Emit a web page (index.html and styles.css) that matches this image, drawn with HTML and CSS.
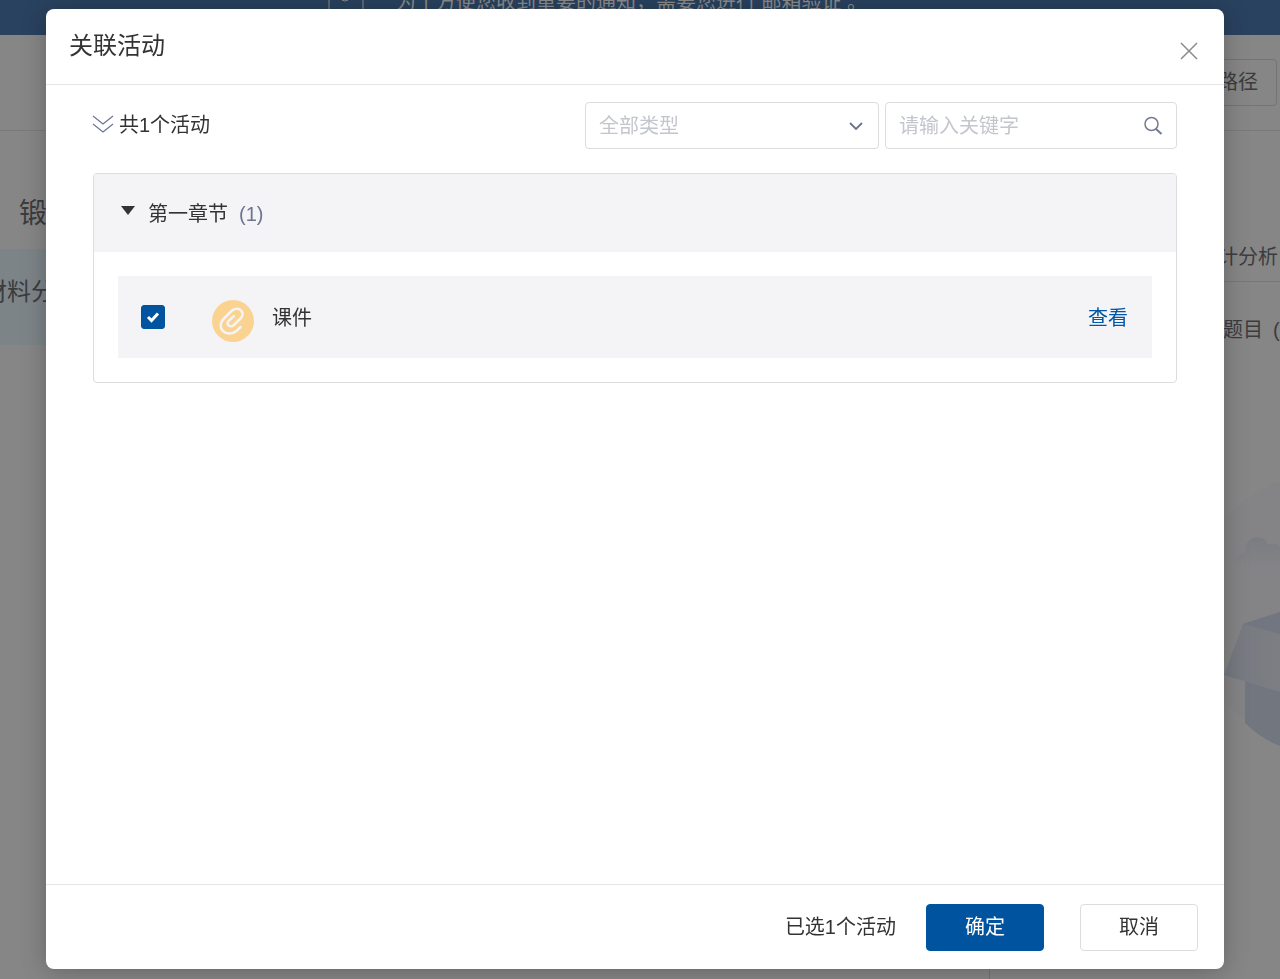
FILE: index.html
```html
<!DOCTYPE html>
<html lang="zh-CN">
<head>
<meta charset="utf-8">
<title>关联活动</title>
<link rel="stylesheet" href="styles.css">
</head>
<body>
<div class="page" aria-hidden="true">
  <div class="banner">
    <svg class="banner-icon" viewBox="0 0 36 28" width="36" height="28"><path d="M1 0V27M35 0V27" /><circle cx="17" cy="13" r="4"/></svg>
    <p>为了方便您收到重要的通知，需要您进行 邮箱验证 。</p>
  </div>
  <div class="page-head"><span class="page-button">学习路径</span></div>
  <div class="columns">
    <div class="sidebar">
      <h2 class="sidebar-title">锻造</h2>
      <div class="sidebar-item"><span>材料分析</span></div>
    </div>
    <div class="aside">
      <div class="aside-tab">统计分析</div>
      <div class="aside-label"><span>题目</span><span>(0)</span></div>
      <svg class="empty-art" viewBox="0 0 56 280" width="56" height="280">
        <defs>
          <linearGradient id="cloud" x1="0" y1="0" x2="0" y2="1"><stop offset="0" stop-color="#7a7c82"/><stop offset="1" stop-color="#848486"/></linearGradient>
          <linearGradient id="flap" x1="0" y1="0" x2="1" y2="0"><stop offset="0" stop-color="#757981"/><stop offset="1" stop-color="#7c7e82"/></linearGradient>
        </defs>
        <circle cx="101" cy="140" r="136" fill="#848486"/>
        <path d="M10 98C10 88 16 84 21 83C20 63 42 64 44 75C50 72 54 74 56 77V98Z" fill="url(#cloud)"/>
        <path d="M21 208L56 220V276Q36 268 21 253Z" fill="#72767f"/>
        <path d="M19 154L56 142V222L0 205Z" fill="url(#flap)"/>
        <path d="M19 154L56 142V164Z" fill="#727680"/>
      </svg>
    </div>
  </div>
</div>

<div class="overlay">
  <section class="modal" role="dialog" aria-modal="true" aria-labelledby="dialog-title">
    <header class="modal-head">
      <h1 id="dialog-title">关联活动</h1>
      <button class="close" type="button" aria-label="关闭"><svg viewBox="0 0 18 18" width="18" height="18"><path d="M1 1L17 17M17 1L1 17"/></svg></button>
    </header>
    <div class="modal-body">
      <div class="toolbar">
        <button class="expand" type="button"><svg viewBox="0 0 22 18" width="22" height="18"><path d="M1 1L11 9L21 1M1 9L11 17L21 9"/></svg><span>共1个活动</span></button>
        <div class="select-box">
          <select aria-label="活动类型"><option>全部类型</option></select>
          <svg viewBox="0 0 14 8" width="14" height="8"><path d="M1 1L7 7L13 1"/></svg>
        </div>
        <div class="search-box">
          <input type="text" placeholder="请输入关键字" aria-label="关键字">
          <button type="button" aria-label="搜索"><svg viewBox="0 0 20 20" width="20" height="20"><circle cx="8.500" cy="8" r="6.500"/><path d="M13 13L18.500 18" stroke-width="2"/></svg></button>
        </div>
      </div>
      <div class="chapter">
        <button class="chapter-head" type="button" aria-expanded="true"><svg viewBox="0 0 14 9" width="14" height="9"><path d="M0 0H14L7 9Z"/></svg><span>第一章节</span><span class="count">(1)</span></button>
        <div class="chapter-body">
          <div class="activity">
            <span class="check">
              <input type="checkbox" id="courseware" checked>
              <svg viewBox="0 0 24 24" width="24" height="24"><path d="M7 12L10.500 15.500L17 8.500"/></svg>
            </span>
            <svg class="clip" viewBox="0 0 42 42" width="42" height="42"><circle cx="21" cy="21" r="21"/><path d="M28.500 27L25 30.500C20.500 34.500 14.500 34.500 11 31C7.500 27.500 8 22.500 11.500 19L19.500 11C22.500 8 27 8 29 10.500C31.500 13 31 16 28.500 18.500L22 25C18.500 28 13.500 24.500 16.500 21L21.800 16"/></svg>
            <label for="courseware">课件</label>
            <a href="#">查看</a>
          </div>
        </div>
      </div>
    </div>
    <footer class="modal-foot">
      <span class="selected">已选1个活动</span>
      <button class="btn primary" type="button">确定</button>
      <button class="btn" type="button">取消</button>
    </footer>
  </section>
</div>
</body>
</html>
```
FILE: styles.css
```css
* { box-sizing: border-box; }
body, h1, h2, p { margin: 0; font-weight: 400; }
body, button, input, select {
  font-family: "Liberation Sans", "Noto Sans CJK SC", sans-serif;
  font-size: 20px;
  line-height: 24px;
  color: #333;
}
button { padding: 0; border: 0; background: none; cursor: pointer; }
svg { display: block; flex: none; fill: none; }

.page {
  height: 100vh;
  overflow: hidden;
  display: flex;
  flex-direction: column;
  background: #868686;
  color: #3c3c3e;
}
.banner {
  height: 35px;
  flex: none;
  display: flex;
  gap: 32px;
  padding-left: 328px;
  background: #29425f;
  color: #8b8b8b;
}
.banner p { margin-top: -10px; white-space: nowrap; }
.banner-icon { margin-top: -16px; stroke: #8b8b8b; stroke-width: 1; }
.page-head {
  height: 96px;
  flex: none;
  display: flex;
  justify-content: flex-end;
  align-items: center;
  padding-right: 3px;
  border-bottom: 1px solid #797979;
}
.page-button {
  padding: 10px 18px 11px;
  border: 1px solid #747476;
  border-radius: 4px;
}
.columns { flex: 1; min-height: 0; display: flex; }
.sidebar { flex: 1; border-right: 1px solid #747474; }
.sidebar-title { padding: 67px 20px 19px 19px; font-size: 28px; line-height: 32px; }
.sidebar-item {
  display: flex;
  align-items: center;
  height: 96px;
  padding-bottom: 10px;
  background: #7d8488;
  overflow: hidden;
  font-size: 24px;
}
.sidebar-item span { margin-left: -17px; }
.aside { width: 290px; overflow: hidden; }
.aside-tab {
  padding: 114px 2px 12px;
  border-bottom: 1px solid #777;
  text-align: right;
}
.aside-label { display: flex; gap: 10px; padding: 36px 0 0 233px; white-space: nowrap; }
.empty-art { margin: 128px 0 0 auto; overflow: hidden; }

.overlay { position: fixed; inset: 0; padding: 9px 56px 10px 46px; display: flex; }
.modal {
  flex: 1;
  min-width: 0;
  display: flex;
  flex-direction: column;
  background: #fff;
  border-radius: 8px;
  box-shadow: 0 2px 24px rgba(0, 0, 0, 0.25);
}
.modal-head {
  display: flex;
  justify-content: space-between;
  align-items: flex-start;
  height: 76px;
  padding: 21px 24px 0 23px;
  border-bottom: 1px solid #e6e6e6;
}
.modal-head h1 { font-size: 24px; line-height: 32px; }
.close { padding: 12px 2px 0; }
.close svg { stroke: #8a8a8a; stroke-width: 1.500; }
.modal-body { flex: 1; min-height: 0; padding: 17px 47px; }

.toolbar { display: flex; align-items: center; gap: 6px; }
.expand { display: flex; align-items: center; gap: 5px; margin: 0 auto 3px -1px; }
.expand span { padding-top: 2px; }
.expand svg { stroke: #6c7393; stroke-width: 1.200; }
.select-box, .search-box {
  display: flex;
  align-items: center;
  height: 47px;
  border: 1px solid #dcdde1;
  border-radius: 4px;
}
.select-box { position: relative; width: 294px; }
.select-box select {
  appearance: none;
  width: 100%;
  height: 100%;
  padding: 0 40px 0 13px;
  border: 0;
  background: none;
  color: #c4c6cd;
}
.select-box svg {
  position: absolute;
  right: 15px;
  stroke: #6c7388;
  stroke-width: 1.800;
  pointer-events: none;
}
.search-box { width: 292px; padding: 0 13px; }
.search-box input { flex: 1; min-width: 0; padding: 0; border: 0; outline: 0; background: none; }
.search-box input::placeholder { color: #c4c6cd; opacity: 1; }
.search-box svg { stroke: #747b90; stroke-width: 1.500; }

.chapter { margin-top: 24px; border: 1px solid #dcdde1; border-radius: 4px; overflow: hidden; }
.chapter-head {
  display: flex;
  align-items: center;
  width: 100%;
  height: 78px;
  padding: 2px 0 0 27px;
  background: #f4f4f6;
}
.chapter-head svg { margin: 0 13px 7px 0; fill: #333; }
.chapter-head .count { margin-left: 11px; color: #6c7393; }
.chapter-body { padding: 24px; }
.activity {
  display: flex;
  align-items: center;
  height: 82px;
  padding: 0 24px 0 23px;
  background: #f4f4f6;
}
.activity label, .activity a { padding-top: 2px; }
.check { display: grid; }
.check > * { grid-area: 1 / 1; }
.check input {
  appearance: none;
  width: 24px;
  height: 24px;
  margin: 0;
  border: 1px solid #00539f;
  border-radius: 3px;
}
.check input:checked { background: #00539f; }
.check svg { stroke: #fff; stroke-width: 3; z-index: 1; pointer-events: none; }
.check input:not(:checked) + svg { visibility: hidden; }
.clip { margin: 7px 18px 0 47px; }
.clip circle { fill: #fad391; }
.clip path { stroke: #f4f4f6; stroke-width: 2.500; stroke-linecap: round; }
.activity a { margin-left: auto; color: #0057a6; text-decoration: none; }

.modal-foot {
  display: flex;
  justify-content: flex-end;
  align-items: center;
  height: 85px;
  padding: 0 26px;
  border-top: 1px solid #e6e6e6;
}
.selected { margin-right: 30px; }
.btn {
  width: 118px;
  height: 47px;
  border: 1px solid #dcdde1;
  border-radius: 4px;
}
.btn.primary { margin-right: 36px; background: #00539f; border-color: #00539f; color: #fff; }
```
